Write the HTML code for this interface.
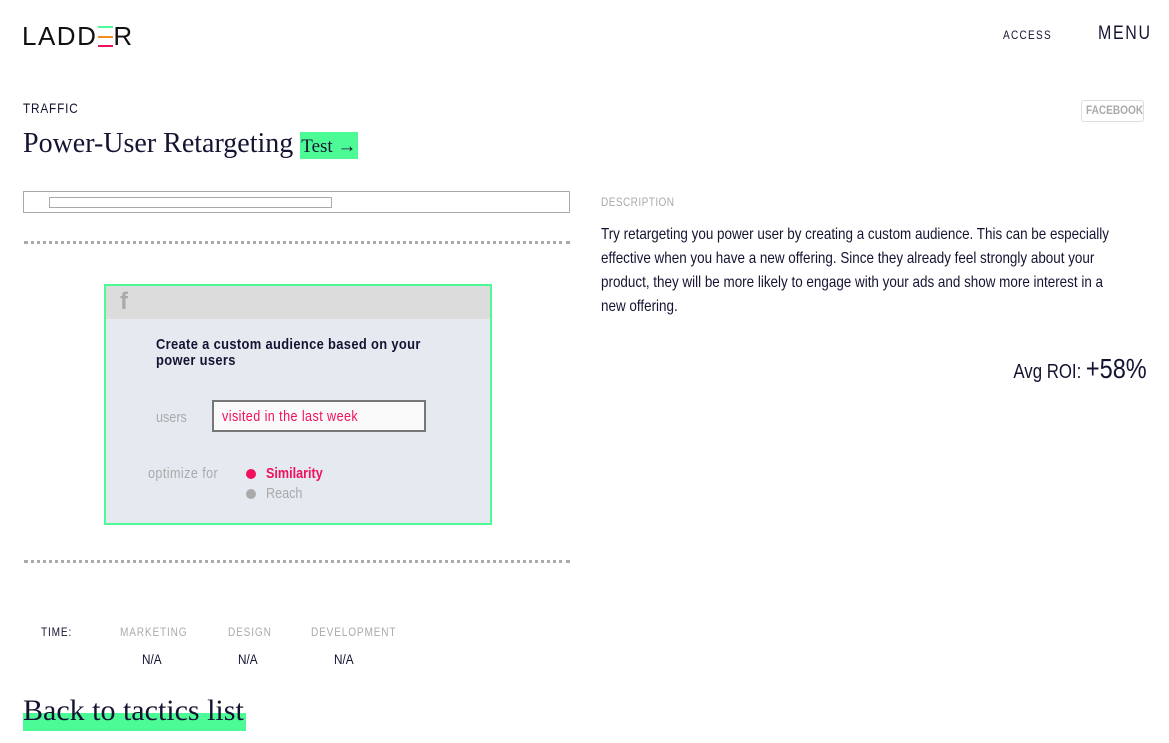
<!DOCTYPE html>
<html><head><meta charset="utf-8"><style>
body{margin:0;width:1169px;height:743px;background:#fff;position:relative;overflow:hidden;color:#141432;font-family:"Liberation Sans",sans-serif}
.a{position:absolute;white-space:nowrap;transform-origin:0 0}
.c{transform:scaleX(.84)}
.serif{font-family:"Liberation Serif",serif}
.dash{position:absolute;left:24px;width:546px;border-top:3px dotted #aaa;height:0}
</style></head><body>
<div class="a" style="left:22px;top:21px;font-size:26px;letter-spacing:1.5px;font-weight:300;color:#111">LADD<span style="position:relative;display:inline-block;width:16px;height:21px;vertical-align:-2px"><i style="position:absolute;left:1px;top:0;width:15px;height:2px;background:#4dfb96"></i><i style="position:absolute;left:1px;top:10px;width:15px;height:2px;background:#f68b1f"></i><i style="position:absolute;left:1px;top:19px;width:15px;height:2px;background:#f0105b"></i></span>R</div>
<div class="a c" style="left:1003px;top:28px;font-size:12px;letter-spacing:1.5px">ACCESS</div>
<div class="a c" style="left:1098px;top:23px;font-size:19px;letter-spacing:2px">MENU</div>
<div class="a c" style="left:23px;top:100px;font-size:14px;letter-spacing:1px">TRAFFIC</div>
<div class="a" style="left:1081px;top:100px;width:61px;height:20px;border:1px solid #ddd;border-radius:3px;"></div>
<div class="a c" style="left:1086px;top:103px;font-size:12px;color:#aaa;font-weight:bold">FACEBOOK</div>
<div class="a serif" style="left:23px;top:128px;font-size:28px">Power-User Retargeting <span style="font-size:19px;background:#4dfb96;padding:4px 2px 2px 1px">Test →</span></div>
<div class="a" style="left:23px;top:191px;width:545px;height:20px;border:1px solid #aaa"></div>
<div class="a" style="left:49px;top:197px;width:281px;height:9px;border:1px solid #aaa"></div>
<div class="dash" style="top:241px"></div>
<div class="a" style="left:104px;top:284px;width:384px;height:237px;border:2px solid #4dfb96;background:#e5e9f0">
 <div style="height:33px;background:#dcdcdc"></div>
 <div class="a" style="left:14px;top:2px;font-size:24px;font-weight:bold;color:#aaa">f</div>
 <div class="a" style="left:50px;top:51px;font-size:15px;font-weight:bold;line-height:16px;letter-spacing:.4px;transform:scaleX(.86)">Create a custom audience based on your<br>power users</div>
 <div class="a c" style="left:50px;top:123px;font-size:15px;color:#aaa">users</div>
 <div class="a" style="left:106px;top:114px;width:210px;height:28px;border:2px solid #777;background:#fafafa"></div>
 <div class="a c" style="left:116px;top:122px;font-size:15px;color:#f0105b;letter-spacing:.5px">visited in the last week</div>
 <div class="a c" style="left:42px;top:179px;font-size:15px;color:#aaa;letter-spacing:.5px">optimize for</div>
 <div class="a" style="left:140px;top:183px;width:10px;height:10px;border-radius:50%;background:#f0105b"></div>
 <div class="a c" style="left:160px;top:179px;font-size:15px;color:#f0105b;font-weight:bold">Similarity</div>
 <div class="a" style="left:140px;top:203px;width:10px;height:10px;border-radius:50%;background:#aaa"></div>
 <div class="a c" style="left:160px;top:199px;font-size:15px;color:#aaa">Reach</div>
</div>
<div class="dash" style="top:560px"></div>
<div class="a c" style="left:601px;top:195px;font-size:12px;color:#aaa;letter-spacing:.5px">DESCRIPTION</div>
<div class="a" style="left:601px;top:223px;font-size:16px;line-height:24px;transform:scaleX(.84)">Try retargeting you power user by creating a custom audience. This can be especially<br>effective when you have a new offering. Since they already feel strongly about your<br>product, they will be more likely to engage with your ads and show more interest in a<br>new offering.</div>
<div class="a" style="right:22px;top:353px;font-size:20px;transform:scaleX(.84);transform-origin:100% 0">Avg ROI: <span style="font-size:28px">+58%</span></div>
<div class="a c" style="left:41px;top:625px;font-size:12px;letter-spacing:1px">TIME:</div>
<div class="a c" style="left:120px;top:625px;font-size:12px;letter-spacing:1px;color:#aaa">MARKETING</div>
<div class="a c" style="left:228px;top:625px;font-size:12px;letter-spacing:1px;color:#aaa">DESIGN</div>
<div class="a c" style="left:311px;top:625px;font-size:12px;letter-spacing:1px;color:#aaa">DEVELOPMENT</div>
<div class="a c" style="left:142px;top:651px;font-size:14px">N/A</div>
<div class="a c" style="left:238px;top:651px;font-size:14px">N/A</div>
<div class="a c" style="left:334px;top:651px;font-size:14px">N/A</div>
<div class="a" style="left:23px;top:713px;width:223px;height:18px;background:#4dfb96"></div>
<div class="a serif" style="left:23px;top:694px;font-size:30px">Back to tactics list</div>
</body></html>
